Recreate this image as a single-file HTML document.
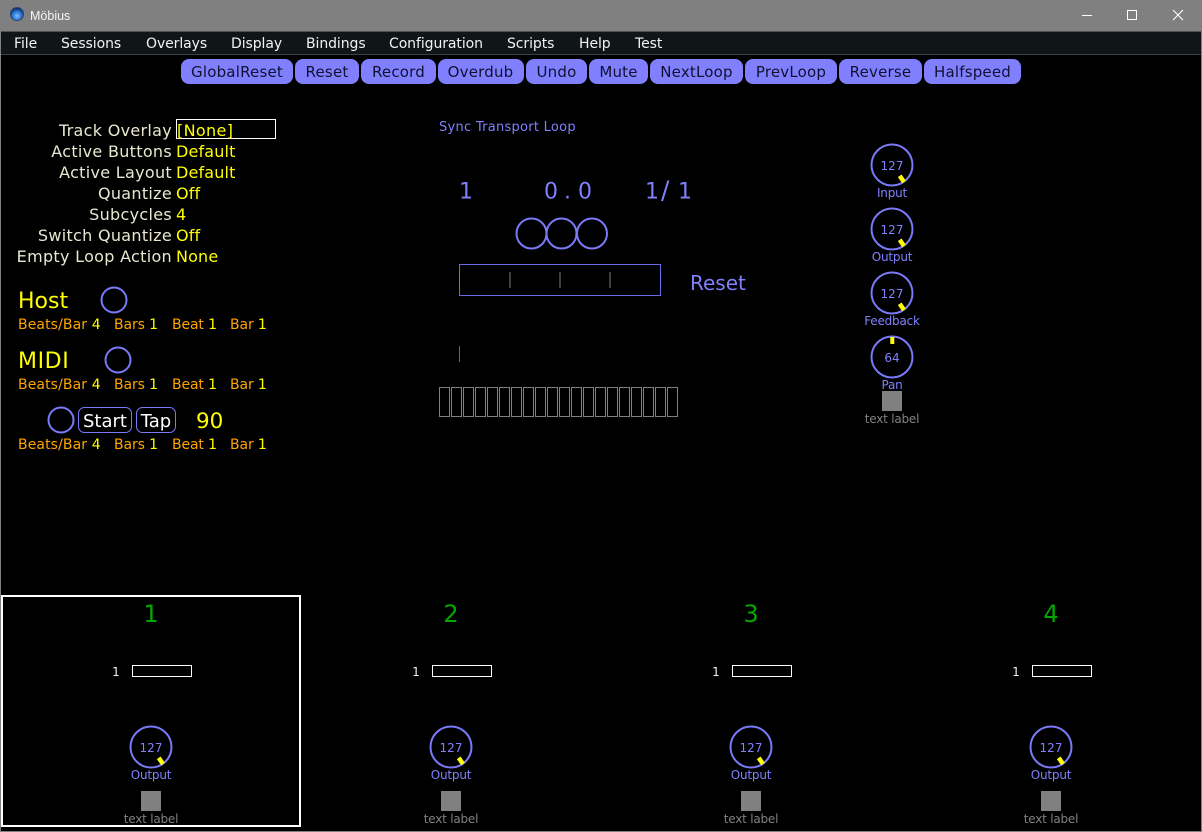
<!DOCTYPE html>
<html><head><meta charset="utf-8"><title>Möbius</title>
<style>
html,body{margin:0;padding:0;background:#000;width:1202px;height:832px;overflow:hidden}
svg{display:block;position:absolute;left:0;top:0}
text{font-family:"DejaVu Sans","Liberation Sans",sans-serif;white-space:pre}
.m{font-size:14px;fill:#f2f2f2;letter-spacing:-.08px}
.b{font-size:15px;fill:#101030;text-anchor:middle;letter-spacing:.2px}
.l{font-size:16px;fill:#e8e8d0;text-anchor:end;letter-spacing:.3px}
.v{font-size:16px;fill:#ffff00;letter-spacing:.15px}
.o{font-size:14px;fill:#ffa500}
.oa{letter-spacing:.1px}
.ob{letter-spacing:-.12px}
.h{font-size:22px;fill:#ffff00}
.k{font-size:12px;fill:#8080ff;text-anchor:middle}
.n{font-size:12px;fill:#8080ff;text-anchor:middle;letter-spacing:-.2px}
.g{font-size:12px;fill:#808080;text-anchor:middle;letter-spacing:-.2px}
.p{font-size:22px;fill:#8080ff}
.c{fill:none;stroke:#7a7af8;stroke-width:2}
.t{fill:none;stroke:#ffff00;stroke-width:4.5}
</style></head><body>
<svg width="1202" height="832" viewBox="0 0 1202 832" xmlns="http://www.w3.org/2000/svg">
<defs><radialGradient id="ball" cx="50%" cy="65%" r="60%"><stop offset="0" stop-color="#7cc0ff"/><stop offset=".6" stop-color="#2a70d0"/><stop offset="1" stop-color="#0b2a60"/></radialGradient></defs>
<rect width="1202" height="832" fill="#000"/>
<rect x="0" y="0" width="1202" height="31" fill="#808080"/>
<rect x="0" y="31" width="1202" height="1" fill="#505050"/>
<rect x="0" y="32" width="1202" height="22" fill="#101518"/>
<rect x="0" y="54" width="1202" height="1" fill="#3a4044"/>
<rect x="0" y="0" width="1" height="832" fill="#808080"/>
<rect x="1201" y="0" width="1" height="832" fill="#808080"/>
<rect x="0" y="831" width="1202" height="1" fill="#808080"/>
<circle cx="17" cy="14" r="6.5" fill="url(#ball)" stroke="#26456e" stroke-width="1"/>
<text x="30" y="20" style="font-size:12.5px;fill:#f4f4f4;font-family:'Liberation Sans',sans-serif">Möbius</text>
<path d="M1082 15.5H1092" stroke="#fff" stroke-width="1"/>
<rect x="1127.5" y="10.5" width="9" height="9" fill="none" stroke="#fff"/>
<path d="M1173 10L1183 20M1183 10L1173 20" stroke="#fff" stroke-width="1.1"/>

<text class="m" x="14" y="48">File</text><text class="m" x="61" y="48">Sessions</text><text class="m" x="146" y="48">Overlays</text><text class="m" x="231" y="48">Display</text><text class="m" x="306" y="48">Bindings</text><text class="m" x="389" y="48">Configuration</text><text class="m" x="507" y="48">Scripts</text><text class="m" x="579" y="48">Help</text><text class="m" x="635" y="48">Test</text>

<g fill="#8080ff">
<rect x="181" y="59" width="112" height="25" rx="8"/><rect x="295" y="59" width="64" height="25" rx="8"/><rect x="361" y="59" width="75" height="25" rx="8"/><rect x="438" y="59" width="86" height="25" rx="8"/><rect x="526" y="59" width="61" height="25" rx="8"/><rect x="589" y="59" width="59" height="25" rx="8"/><rect x="650" y="59" width="93" height="25" rx="8"/><rect x="745" y="59" width="92" height="25" rx="8"/><rect x="839" y="59" width="83" height="25" rx="8"/><rect x="924" y="59" width="97" height="25" rx="8"/>
</g>
<text class="b" x="237" y="77">GlobalReset</text><text class="b" x="327" y="77">Reset</text><text class="b" x="398.500" y="77">Record</text><text class="b" x="480.500" y="77">Overdub</text><text class="b" x="556.500" y="77">Undo</text><text class="b" x="618.500" y="77">Mute</text><text class="b" x="696.500" y="77">NextLoop</text><text class="b" x="791" y="77">PrevLoop</text><text class="b" x="880.500" y="77">Reverse</text><text class="b" x="972.500" y="77">Halfspeed</text>

<text class="l" x="172" y="136">Track Overlay</text>
<text class="l" x="172" y="157">Active Buttons</text>
<text class="l" x="172" y="178">Active Layout</text>
<text class="l" x="172" y="199">Quantize</text>
<text class="l" x="172" y="220">Subcycles</text>
<text class="l" x="172" y="241">Switch Quantize</text>
<text class="l" x="172" y="262">Empty Loop Action</text>
<rect x="176.500" y="119.500" width="99" height="19" fill="none" stroke="#fff"/>
<text class="v" x="177" y="136" style="letter-spacing:.35px">[None]</text>
<text class="v" x="176" y="157">Default</text>
<text class="v" x="176" y="178">Default</text>
<text class="v" x="176" y="199">Off</text>
<text class="v" x="176" y="220">4</text>
<text class="v" x="176" y="241">Off</text>
<text class="v" x="176" y="262">None</text>

<text class="h" x="18" y="308">Host</text><circle class="c" cx="114" cy="300" r="12.500"/>
<text class="h" x="18" y="368" style="letter-spacing:.6px">MIDI</text><circle class="c" cx="118" cy="360" r="12.500"/>
<circle class="c" cx="61" cy="420" r="12.500"/>
<rect x="78.500" y="407.500" width="53" height="25" rx="6" fill="none" stroke="#7a7af8"/>
<rect x="136.500" y="407.500" width="39" height="25" rx="6" fill="none" stroke="#7a7af8"/>
<text x="105" y="427" text-anchor="middle" style="font-size:18px;fill:#fff">Start</text>
<text x="156" y="427" text-anchor="middle" style="font-size:18px;fill:#fff">Tap</text>
<text class="h" x="196" y="428" style="font-size:21.5px">90</text>

<g><text class="o oa" x="18" y="329">Beats/Bar <tspan fill="#ffff00">4</tspan></text><text class="o ob" x="114" y="329">Bars <tspan fill="#ffff00">1</tspan></text><text class="o ob" x="172" y="329">Beat <tspan fill="#ffff00">1</tspan></text><text class="o ob" x="230" y="329">Bar <tspan fill="#ffff00">1</tspan></text></g>
<g><text class="o oa" x="18" y="389">Beats/Bar <tspan fill="#ffff00">4</tspan></text><text class="o ob" x="114" y="389">Bars <tspan fill="#ffff00">1</tspan></text><text class="o ob" x="172" y="389">Beat <tspan fill="#ffff00">1</tspan></text><text class="o ob" x="230" y="389">Bar <tspan fill="#ffff00">1</tspan></text></g>
<g><text class="o oa" x="18" y="449">Beats/Bar <tspan fill="#ffff00">4</tspan></text><text class="o ob" x="114" y="449">Bars <tspan fill="#ffff00">1</tspan></text><text class="o ob" x="172" y="449">Beat <tspan fill="#ffff00">1</tspan></text><text class="o ob" x="230" y="449">Bar <tspan fill="#ffff00">1</tspan></text></g>

<text x="439" y="131" style="font-size:13px;letter-spacing:.27px;fill:#8080ff">Sync Transport Loop</text>
<text class="p" x="459" y="198.500">1</text>
<text class="p" x="544 564 578" y="198.500">0.0</text>
<text class="p" x="645" y="198.500">1</text>
<text class="p" x="661" y="198.500" style="font-size:25px">/</text>
<text class="p" x="678" y="198.500">1</text>
<circle class="c" cx="531.500" cy="233.500" r="15"/><circle class="c" cx="561.500" cy="233.500" r="15"/><circle class="c" cx="592" cy="233.500" r="15"/>
<rect x="459.500" y="264.500" width="201" height="31" fill="none" stroke="#6a6ae8"/>
<path d="M510 272V288M560 272V288M610 272V288" stroke="#555" stroke-width="1.500"/>
<text x="690" y="290" style="font-size:20px;fill:#8080ff">Reset</text>
<path d="M459.500 346V362" stroke="#229922"/>
<g fill="none" stroke="#808080">
<rect x="439.500" y="387.500" width="10" height="29"/><rect x="451.500" y="387.500" width="10" height="29"/><rect x="463.500" y="387.500" width="10" height="29"/><rect x="475.500" y="387.500" width="10" height="29"/><rect x="487.500" y="387.500" width="10" height="29"/><rect x="499.500" y="387.500" width="10" height="29"/><rect x="511.500" y="387.500" width="10" height="29"/><rect x="523.500" y="387.500" width="10" height="29"/><rect x="535.500" y="387.500" width="10" height="29"/><rect x="547.500" y="387.500" width="10" height="29"/><rect x="559.500" y="387.500" width="10" height="29"/><rect x="571.500" y="387.500" width="10" height="29"/><rect x="583.500" y="387.500" width="10" height="29"/><rect x="595.500" y="387.500" width="10" height="29"/><rect x="607.500" y="387.500" width="10" height="29"/><rect x="619.500" y="387.500" width="10" height="29"/><rect x="631.500" y="387.500" width="10" height="29"/><rect x="643.500" y="387.500" width="10" height="29"/><rect x="655.500" y="387.500" width="10" height="29"/><rect x="667.500" y="387.500" width="10" height="29"/>
</g>

<circle class="c" cx="892" cy="165" r="20.500"/><path class="t" d="M899.700 175.800L904 182"/><text class="k" x="892" y="170">127</text><text class="n" x="892" y="197">Input</text>
<circle class="c" cx="892" cy="229" r="20.500"/><path class="t" d="M899.700 239.800L904 246"/><text class="k" x="892" y="234">127</text><text class="n" x="892" y="261">Output</text>
<circle class="c" cx="892" cy="293" r="20.500"/><path class="t" d="M899.700 303.800L904 310"/><text class="k" x="892" y="298">127</text><text class="n" x="892" y="325">Feedback</text>
<circle class="c" cx="892" cy="357" r="20.500"/><path class="t" d="M892.300 337V344" style="stroke-width:4"/><text class="k" x="892" y="362">64</text><text class="n" x="892" y="389">Pan</text>
<rect x="882" y="391" width="20" height="20" fill="#808080"/><text class="g" x="892" y="423">text label</text>

<rect x="2" y="596" width="298" height="230" fill="none" stroke="#fff" stroke-width="2"/>

<g><text x="151" y="622" text-anchor="middle" style="font-size:24px;fill:#00a800">1</text><text x="116" y="676" text-anchor="middle" style="font-size:12px;fill:#f0f0f0">1</text><rect x="132.500" y="665.500" width="59" height="11" fill="none" stroke="#fff"/><circle class="c" cx="151" cy="747" r="20.500"/><path class="t" d="M158.700 757.800L163 764"/><text class="k" x="151" y="752">127</text><text class="n" x="151" y="779">Output</text><rect x="141" y="791" width="20" height="20" fill="#808080"/><text class="g" x="151" y="823">text label</text></g>
<g transform="translate(300 0)"><text x="151" y="622" text-anchor="middle" style="font-size:24px;fill:#00a800">2</text><text x="116" y="676" text-anchor="middle" style="font-size:12px;fill:#f0f0f0">1</text><rect x="132.500" y="665.500" width="59" height="11" fill="none" stroke="#fff"/><circle class="c" cx="151" cy="747" r="20.500"/><path class="t" d="M158.700 757.800L163 764"/><text class="k" x="151" y="752">127</text><text class="n" x="151" y="779">Output</text><rect x="141" y="791" width="20" height="20" fill="#808080"/><text class="g" x="151" y="823">text label</text></g>
<g transform="translate(600 0)"><text x="151" y="622" text-anchor="middle" style="font-size:24px;fill:#00a800">3</text><text x="116" y="676" text-anchor="middle" style="font-size:12px;fill:#f0f0f0">1</text><rect x="132.500" y="665.500" width="59" height="11" fill="none" stroke="#fff"/><circle class="c" cx="151" cy="747" r="20.500"/><path class="t" d="M158.700 757.800L163 764"/><text class="k" x="151" y="752">127</text><text class="n" x="151" y="779">Output</text><rect x="141" y="791" width="20" height="20" fill="#808080"/><text class="g" x="151" y="823">text label</text></g>
<g transform="translate(900 0)"><text x="151" y="622" text-anchor="middle" style="font-size:24px;fill:#00a800">4</text><text x="116" y="676" text-anchor="middle" style="font-size:12px;fill:#f0f0f0">1</text><rect x="132.500" y="665.500" width="59" height="11" fill="none" stroke="#fff"/><circle class="c" cx="151" cy="747" r="20.500"/><path class="t" d="M158.700 757.800L163 764"/><text class="k" x="151" y="752">127</text><text class="n" x="151" y="779">Output</text><rect x="141" y="791" width="20" height="20" fill="#808080"/><text class="g" x="151" y="823">text label</text></g>
</svg>
</body></html>
